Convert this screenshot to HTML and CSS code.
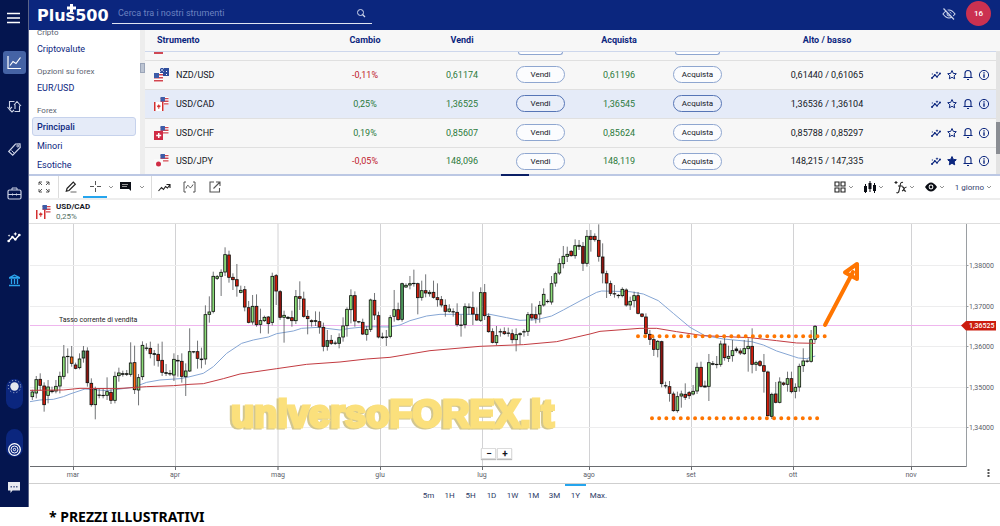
FILE: index.html
```html
<!DOCTYPE html>
<html lang="it">
<head>
<meta charset="utf-8">
<meta name="viewport" content="width=device-width, initial-scale=1">
<title>Plus500 - USD/CAD</title>
<link rel="stylesheet" href="styles.css">
</head>
<body>
<svg class="sprite" aria-hidden="true">
  <symbol id="us" viewBox="0 0 9 9"><path fill="#fff" d="M0 0h9v9H0z"/><path fill="#d2454f" d="M0 1h9v1.500H0zM0 4h9v1.500H0zM0 7h9v1.500H0z"/><path fill="#3d5ca8" d="M0 0h5v5H0z"/></symbol>
  <symbol id="f-nzd" viewBox="0 0 15 14"><rect x="6" y="0" width="9" height="8" fill="#2f4d9c"/><path d="M6 0l4 4M10 0L6 4" stroke="#c9d2ea" stroke-width=".7"/><path d="M12 3h1v1h-1zM12 6h1v1h-1z" fill="#fff"/><use href="#us" x="0" y="5" width="9" height="9"/></symbol>
  <symbol id="f-cad" viewBox="0 0 15 14"><use href="#us" x="6" y="0" width="9" height="8"/><path d="M0 5h10v9H0z" fill="#fff"/><path d="M0 5h1.500v9H0zM8 5h1.500v9H8zM4.800 7l.8 1.500 1.200.3-.8 1.500h-.8V12h-.8v-1.700h-.9l-.8-1.500 1.300-.3z" fill="#d32f2f"/></symbol>
  <symbol id="f-chf" viewBox="0 0 15 14"><use href="#us" x="6" y="0" width="9" height="8"/><rect x="0" y="5" width="9" height="9" fill="#d02c45"/><path d="M4 7h1.500v1.800h1.700v1.400H5.500V12H4v-1.800H2.200V8.800H4z" fill="#fff"/></symbol>
  <symbol id="f-jpy" viewBox="0 0 15 14"><use href="#us" x="6" y="0" width="9" height="8"/><rect x="0" y="5" width="9" height="9" fill="#fafafa"/><circle cx="4.500" cy="10" r="2.500" fill="#d02c45"/></symbol>
  <symbol id="spark" viewBox="0 0 12 12"><path d="M2 9l2.800-3 2.200 1.800L10 4.500" fill="none" stroke="currentColor" stroke-width="1.100"/><circle cx="2" cy="9" r="1"/><circle cx="4.800" cy="6" r=".9"/><circle cx="7" cy="7.800" r=".9"/><circle cx="10" cy="4.500" r="1"/><path d="M7 2.200l.5 1 1 .5-1 .5-.5 1-.5-1-1-.5 1-.5zM2.300 4l.3.700.7.300-.7.300-.3.700-.3-.7-.7-.3.700-.3z"/></symbol>
  <symbol id="star" viewBox="0 0 12 12"><path d="M6 1.500l1.300 2.900 3 .3-2.200 2.100.6 3L6 8.300 3.300 9.800l.6-3-2.200-2.100 3-.3z" stroke="currentColor" stroke-linejoin="round"/></symbol>
  <symbol id="bell" viewBox="0 0 12 12"><path d="M3 8V4.500a3 3 0 0 1 6 0V8M1.500 8.500h9M5 10.500h2" fill="none" stroke="currentColor" stroke-width="1.100"/></symbol>
  <symbol id="info" viewBox="0 0 12 12"><circle cx="6" cy="6" r="4.600" fill="none" stroke="currentColor"/><path d="M5.300 3.200h1.400v1.200H5.300zM5.300 5.300h1.400v3.500H5.300z"/></symbol>
  <symbol id="chev" viewBox="0 0 6 6"><path d="M1 2l2 2 2-2" fill="none" stroke="currentColor" stroke-width=".8"/></symbol>
</svg>

<div class="app">
  <aside class="rail">
    <button class="rail-menu" aria-label="Menu"><svg width="14" height="12" viewBox="0 0 14 12"><path d="M0 1.500h13M0 6h13M0 10.500h13" stroke="#fff" stroke-width="1.500"/></svg></button>
    <nav class="rail-nav" aria-label="Sezioni">
      <a class="rail-item active" href="#grafici" aria-label="Grafici"><svg width="15" height="15" viewBox="0 0 15 15"><path d="M1 1v12.500h13M3 10.500l3-4 3 2 4.500-6" fill="none" stroke="#fff" stroke-width="1.200"/></svg></a>
      <a class="rail-item" href="#ordini" aria-label="Ordini"><svg width="15" height="15" viewBox="0 0 15 15"><path d="M7.500 2.500h-5V9M.5 8l2 2.500L5 8M2.500 10.500L5 13l2-2M7.500 12.500h5V6.500M7 6l3-3.500 4 4.500M8 5.500V10" fill="none" stroke="#cdd3e6" stroke-width="1.100"/></svg></a>
      <a class="rail-item" href="#offerte" aria-label="Offerte"><svg width="15" height="15" viewBox="0 0 15 15"><path d="M8.500 2L13 1.800l.2 3.700-7.500 7.700-4-3.700z" fill="none" stroke="#cdd3e6" stroke-width="1.200"/><circle cx="10.800" cy="4" r="1" fill="none" stroke="#cdd3e6"/><path d="M4.500 8.500l2.500 2.400" stroke="#cdd3e6"/></svg></a>
      <a class="rail-item" href="#posizioni" aria-label="Posizioni"><svg width="15" height="15" viewBox="0 0 15 15"><rect x="1" y="4" width="13" height="9" rx="1.500" fill="none" stroke="#cdd3e6" stroke-width="1.200"/><path d="M5 4V2h5v2M1 8.500h4.500M9.500 8.500H14M5.500 7.500v2M9.500 7.500v2M5.500 8.500h4" fill="none" stroke="#cdd3e6"/></svg></a>
      <a class="rail-item white" href="#insights" aria-label="Insights"><svg width="16" height="16"><use href="#spark"/></svg></a>
      <a class="rail-item" href="#deposito" aria-label="Deposito"><svg width="13" height="13" viewBox="0 0 13 13"><path d="M6.500 1l5 2.500H1.500z M1 4h11M3.500 5v5M6.500 5v5M9.500 5v5M1 11.500h11" fill="none" stroke="#2ba4ee" stroke-width="1.300"/></svg></a>
    </nav>
    <div class="rail-foot">
      <button class="pill tall" aria-label="Tema chiaro"><svg width="15" height="15" viewBox="0 0 15 15"><circle cx="7.500" cy="7.500" r="4.200" fill="#e4e7ee"/><circle cx="7.500" cy="7.500" r="6.200" fill="none" stroke="#c4cce0" stroke-width="1" stroke-dasharray="1 2.250"/></svg></button>
      <button class="pill low" aria-label="Modalità reale"><svg width="15" height="15" viewBox="0 0 15 15" fill="none" stroke="#fff"><circle cx="7.500" cy="7.500" r="5.800" stroke-width="1.300"/><circle cx="7.500" cy="7.500" r="3.500"/><circle cx="7.500" cy="7.500" r="1.200"/></svg></button>
      <button class="chat" aria-label="Chat"><svg width="12" height="11" viewBox="0 0 12 11"><path d="M0 0h12v8.500H4.500L2.500 11V8.500H0z" fill="#e8eaf0"/><path d="M2.500 4h1.500v1.500H2.500zM5.300 4h1.500v1.500H5.300zM8 4h1.500v1.500H8z" fill="#53608c"/></svg></button>
    </div>
  </aside>

  <main class="main">
    <header class="topbar">
      <div class="logo">Plus500<svg class="plus" width="9" height="8" viewBox="0 0 9 8"><path d="M3 0h3v2.500h3v3H6V8H3V5.500H0v-3h3z" fill="#fff"/></svg></div>
      <div class="search">
        <input type="search" aria-label="Cerca" placeholder="Cerca tra i nostri strumenti">
        <svg width="10" height="10" viewBox="0 0 10 10"><circle cx="4.500" cy="4.500" r="3" fill="none" stroke="#d4dbef"/><path d="M6.500 6.500L9 9" stroke="#d4dbef" stroke-width="1.200"/></svg>
      </div>
      <div class="top-right">
        <button aria-label="Nascondi saldo"><svg width="14" height="12" viewBox="0 0 14 12"><path d="M1 6q6-8 12 0-6 8-12 0z" fill="none" stroke="#cbd3ea" stroke-width="1.200"/><circle cx="7" cy="6" r="2" fill="none" stroke="#cbd3ea"/><path d="M2.500 0l10.500 11" stroke="#0b267e" stroke-width="1.500"/><path d="M1.500.5l10.500 11" stroke="#cbd3ea" stroke-width="1.200"/></svg></button>
        <button class="badge" aria-label="Notifiche">16</button>
      </div>
    </header>

    <section class="market">
      <nav class="cats" aria-label="Categorie">
        <h2>Cripto</h2>
        <a href="#cripto">Criptovalute</a>
        <h2>Opzioni su forex</h2>
        <a href="#eurusd">EUR/USD</a>
        <h2>Forex</h2>
        <a class="selected" href="#principali">Principali</a>
        <a href="#minori">Minori</a>
        <a href="#esotiche">Esotiche</a>
      </nav>
      <div class="cats-scroll"><div class="thumb"></div></div>
      <div class="quotes">
        <table>
          <colgroup><col><col class="c-chg"><col class="c-num"><col class="c-btn"><col class="c-num"><col class="c-btn"><col class="c-range"><col class="c-act"></colgroup>
          <thead><tr><th class="name" scope="col">Strumento</th><th scope="col">Cambio</th><th scope="col">Vendi</th><td></td><th scope="col">Acquista</th><td></td><th scope="col">Alto / basso</th><td></td></tr></thead>
          <tbody>
            <tr class="cut"><td class="name"><i class="red-edge"></i></td><td></td><td></td><td><i class="pill-edge"></i></td><td></td><td><i class="pill-edge"></i></td><td></td><td></td></tr>
            <tr><td class="name"><svg class="flag"><use href="#f-nzd"/></svg>NZD/USD</td><td class="down">-0,11%</td><td class="up">0,61174</td><td><button class="trade">Vendi</button></td><td class="up">0,61196</td><td><button class="trade">Acquista</button></td><td>0,61440 / 0,61065</td><td><div class="acts"><button aria-label="Insights"><svg><use href="#spark"/></svg></button><button aria-label="Preferito"><svg class="hollow"><use href="#star"/></svg></button><button aria-label="Avviso"><svg><use href="#bell"/></svg></button><button aria-label="Dettagli"><svg><use href="#info"/></svg></button></div></td></tr>
            <tr class="current"><td class="name"><svg class="flag"><use href="#f-cad"/></svg>USD/CAD</td><td class="up">0,25%</td><td class="up">1,36525</td><td><button class="trade">Vendi</button></td><td class="up">1,36545</td><td><button class="trade">Acquista</button></td><td>1,36536 / 1,36104</td><td><div class="acts"><button aria-label="Insights"><svg><use href="#spark"/></svg></button><button aria-label="Preferito"><svg class="hollow"><use href="#star"/></svg></button><button aria-label="Avviso"><svg><use href="#bell"/></svg></button><button aria-label="Dettagli"><svg><use href="#info"/></svg></button></div></td></tr>
            <tr><td class="name"><svg class="flag"><use href="#f-chf"/></svg>USD/CHF</td><td class="up">0,19%</td><td class="up">0,85607</td><td><button class="trade">Vendi</button></td><td class="up">0,85624</td><td><button class="trade">Acquista</button></td><td>0,85788 / 0,85297</td><td><div class="acts"><button aria-label="Insights"><svg><use href="#spark"/></svg></button><button aria-label="Preferito"><svg class="hollow"><use href="#star"/></svg></button><button aria-label="Avviso"><svg><use href="#bell"/></svg></button><button aria-label="Dettagli"><svg><use href="#info"/></svg></button></div></td></tr>
            <tr><td class="name"><svg class="flag"><use href="#f-jpy"/></svg>USD/JPY</td><td class="down">-0,05%</td><td class="up">148,096</td><td><button class="trade">Vendi</button></td><td class="up">148,119</td><td><button class="trade">Acquista</button></td><td>148,215 / 147,335</td><td><div class="acts"><button aria-label="Insights"><svg><use href="#spark"/></svg></button><button aria-label="Preferito"><svg><use href="#star"/></svg></button><button aria-label="Avviso"><svg><use href="#bell"/></svg></button><button aria-label="Dettagli"><svg><use href="#info"/></svg></button></div></td></tr>
          </tbody>
        </table>
        <div class="quotes-scroll"><div class="thumb"></div></div>
      </div>
      <div class="splitter"></div>
    </section>

    <div class="tools">
      <button class="tool full" aria-label="Schermo intero"><svg width="12" height="12" viewBox="0 0 12 12"><path d="M1 4V1h3M8 1h3v3M11 8v3H8M4 11H1V8M1 1l3 3M11 1L8 4M11 11L8 8M1 11l3-3" fill="none" stroke="#444" stroke-width=".9"/></svg></button>
      <button class="tool" aria-label="Disegna"><svg width="12" height="12" viewBox="0 0 12 12"><path d="M2 7.500L8.300 1.200l2 2L4 9.500l-2.700.7z" fill="none" stroke="#222" stroke-width="1.200"/><path d="M5.500 11h6" stroke="#666"/></svg></button>
      <button class="tool on" aria-label="Mirino"><svg width="11" height="11" viewBox="0 0 11 11"><path d="M5.500 0v4M5.500 7v4M0 5.500h4M7 5.500h4" stroke="#555"/></svg></button>
      <button class="drop" aria-label="Opzioni mirino"><svg><use href="#chev"/></svg></button>
      <button class="tool" aria-label="Etichette"><svg width="12" height="10" viewBox="0 0 12 10"><path d="M0 0h11v9L9 7H0z" fill="#0c0f16"/><path d="M2 2.500h6M2 4.500h5" stroke="#999"/></svg></button>
      <button class="drop last" aria-label="Opzioni etichette"><svg><use href="#chev"/></svg></button>
      <button class="tool wide" aria-label="Tendenza"><svg width="13" height="11" viewBox="0 0 13 11"><path d="M.5 9l3-3.500 2 2 2-3 2 1.500L12 2.500M8.500 2.500H12V6" fill="none" stroke="#222" stroke-width="1.100"/></svg></button>
      <button class="tool wide" aria-label="Intervallo"><svg width="13" height="12" viewBox="0 0 13 12"><path d="M3 1H1v10h2M10 1h2v10h-2M3 7.500q1.500-5 3-2t4-2" fill="none" stroke="#555"/></svg></button>
      <button class="tool wide" aria-label="Apri in nuova finestra"><svg width="12" height="12" viewBox="0 0 12 12"><path d="M5 1H1v10h9.500V7M7 1h4v4M11 1L4.500 7.500" fill="none" stroke="#555" stroke-width="1.100"/></svg></button>
      <div class="tools-right">
        <button class="menu" aria-label="Layout"><svg width="12" height="12" viewBox="0 0 12 12"><path d="M1 1h4v4H1zM7 1h4v4H7zM1 7h4v4H1zM7 7h4v4H7z" fill="none" stroke="#222" stroke-width="1.100"/></svg><svg class="ch"><use href="#chev"/></svg></button>
        <button class="menu" aria-label="Tipo di grafico"><svg width="12" height="12" viewBox="0 0 12 12"><path d="M0 5h3v6H0zM4.500 2h3v6h-3zM9 4h3v6H9z" fill="#0a0d14"/><path d="M1.500 3v9M6 0v11M10.500 2v10" stroke="#0a0d14"/></svg><svg class="ch"><use href="#chev"/></svg></button>
        <button class="menu" aria-label="Indicatori"><svg width="13" height="13" viewBox="0 0 13 13"><path d="M9 1.500q-2.200-.8-2.700 2L5 10q-.6 2.500-2.600 1.600M4 5h4.500M8 6q1.500-.5 2 2t2 2M12.500 6q-2 .5-2.500 2t-2 2M.5 1.500h3M2 0v3" fill="none" stroke="#222" stroke-width="1.100"/></svg><svg class="ch"><use href="#chev"/></svg></button>
        <button class="menu" aria-label="Visualizzazione"><svg width="12" height="10" viewBox="0 0 12 10"><path d="M0 5q6-9 12 0-6 9-12 0z" fill="#0a0d14"/><circle cx="6" cy="5" r="2.400" fill="#fff"/><circle cx="6" cy="5" r="1.400" fill="#0a0d14"/></svg><svg class="ch"><use href="#chev"/></svg></button>
        <button class="menu period">1 giorno<svg class="ch"><use href="#chev"/></svg></button>
      </div>
    </div>

    <div class="chart-head">
      <svg class="flag"><use href="#f-cad"/></svg>
      <div><h1>USD/CAD</h1><p>0,25%</p></div>
    </div>

    <div class="chart">
      <svg class="plot" viewBox="30 224 970 259" role="img" aria-label="Grafico giornaliero USD/CAD">
        <path class="grid-v" d="M73.500 224v246M175.500 224v246M278 224v246M380.500 224v246M482.500 224v246M589.500 224v246M691.500 224v246M793.500 224v246M911.500 224v246"/>
        <path class="grid-h" d="M30 265.500h936M30 306.500h936M30 346.500h936M30 387.500h936M30 427.500h936"/>
        <path class="rate" d="M30 325.500h936"/>
        <g id="series" transform="translate(0 220) scale(.33333)"></g>
        <path class="axis" d="M30 466.500h936.500M73.500 467v3M175.500 467v3M278 467v3M380.500 467v3M482.500 467v3M589.500 467v3M691.500 467v3M793.500 467v3M911.500 467v3"/>
        <path class="axis-v" d="M966.500 224v243M966.500 265.500h2M966.500 306.500h2M966.500 346.500h2M966.500 387.500h2M966.500 427.500h2"/>
        <text class="rate-label" x="59" y="322">Tasso corrente di vendita</text>
        <text class="brand-mark" x="231" y="427">universoFOREX.it</text>
        <path class="level" d="M638 336.200h190M652 418.200h169"/>
        <path class="arrow-line" d="M825 325L853 272"/>
        <path class="arrow-head" d="M845 272.500l12-8.500v15z"/>
        <g class="months"><text x="73" y="477">mar</text><text x="175" y="477">apr</text><text x="278" y="477">mag</text><text x="380" y="477">giu</text><text x="482" y="477">lug</text><text x="589" y="477">ago</text><text x="691" y="477">set</text><text x="793" y="477">ott</text><text x="911" y="477">nov</text></g>
        <g class="prices"><text x="969" y="268">1,38000</text><text x="969" y="309">1,37000</text><text x="969" y="349">1,36000</text><text x="969" y="390">1,35000</text><text x="969" y="430">1,34000</text></g>
        <path d="M961 325.500l5-4.500h30v9.500h-30z" fill="#cb1c0e"/>
        <text class="price-tag" x="969" y="328">1,36525</text>
        <path class="more" d="M988.500 469v2M988.500 472v2M988.500 475v2"/>
      </svg>
      <div class="zoom"><button aria-label="Riduci">−</button><button aria-label="Ingrandisci">+</button></div>
    </div>

    <div class="ranges">
      <button>5m</button><button>1H</button><button>5H</button><button>1D</button><button>1W</button><button>1M</button><button>3M</button><button class="on">1Y</button><button class="max">Max.</button>
    </div>
  </main>
</div>
<footer class="note">* PREZZI ILLUSTRATIVI</footer>
<script src="chart.js"></script>
</body>
</html>
```
FILE: styles.css
```css
* { box-sizing: border-box; }
body { margin: 0; background: #fff; font-family: Roboto, "Liberation Sans", sans-serif; font-size: 9px; color: #14171f; }
button { margin: 0; padding: 0; border: 0; background: none; font: inherit; color: inherit; display: inline-flex; align-items: center; justify-content: center; }
a { color: inherit; text-decoration: none; }
h1, h2, p { margin: 0; font-size: inherit; }
svg { display: block; flex: none; }
.sprite { position: absolute; width: 0; height: 0; }

.app { display: flex; }
.main { flex: 1; min-width: 0; }

/* left rail */
.rail { width: 29px; background: #04154f; border-right: 1px solid #5a6488; display: flex; flex-direction: column; align-items: center; }
.rail-menu { height: 36px; }
.rail-nav { height: 241px; margin-top: 15px; display: flex; flex-direction: column; justify-content: space-between; }
.rail-item { width: 23px; height: 23px; display: flex; align-items: center; justify-content: center; border-radius: 3px; }
.rail-item.active { background: #4563a5; }
.rail-item.white { color: #fff; fill: #fff; }
.rail-foot { margin-top: auto; display: flex; flex-direction: column; align-items: center; padding-top: 24px; }
.pill { width: 17px; border-radius: 9px; background: #0b267e; }
.pill.tall { height: 30px; align-items: flex-start; margin-bottom: 20px; }
.pill.low { height: 28px; align-items: flex-end; }
.chat { height: 20px; margin: 20px 0 10px; }

/* top bar */
.topbar { height: 30px; background: #0b267e; display: flex; align-items: center; padding: 0 9px 3px 8px; }
.logo { position: relative; width: 70px; margin-right: 5px; padding-top: 5px; color: #fff; font: bold 16px/20px "DejaVu Sans", sans-serif; }
.plus { position: absolute; left: 30px; top: 3px; }
.search { flex: 0 1 260px; height: 18px; margin-top: 2px; border-bottom: 1px solid #dfe4f2; display: flex; align-items: center; padding: 0 6px 2px; }
.search input { flex: 1; min-width: 0; border: 0; padding: 0; background: none; outline: none; color: #fff; font: 9px Roboto, sans-serif; }
.search input::placeholder { color: #6c82c0; }
.top-right { margin-left: auto; display: flex; align-items: center; gap: 10px; }
.badge { width: 25px; height: 25px; border-radius: 50%; background: #cb3150; color: #fff; font-size: 8px; font-weight: 500; }

/* market list */
.market { position: relative; display: flex; height: 146px; border-bottom: 2px solid #bcc8e4; }
.cats { flex: 0 0 111px; overflow: hidden; display: flex; flex-direction: column; justify-content: flex-end; padding: 0 4px 0 3px; color: #0b267e; }
.cats h2 { flex: none; height: 20px; padding: 7px 5px 0; font-size: 8px; line-height: 14px; font-weight: 400; color: #5b6270; }
.cats a { flex: none; height: 19px; padding: 0 4px; border: 1px solid transparent; border-radius: 3px; line-height: 18px; }
.cats .selected { background: #e5ebf8; border-color: #c6d2ec; font-weight: 500; }
.cats-scroll { flex: 0 0 5px; background: #ededed; padding-top: 33px; }
.cats-scroll .thumb { height: 10px; background: #bcc4d2; border: 1px solid #9ba5b8; }
.quotes { flex: 1; min-width: 0; display: flex; align-items: flex-start; background: #f7f7f7; }
table { flex: 1; min-width: 0; table-layout: fixed; border-collapse: collapse; }
.c-chg { width: 94px; }
.c-num { width: 100px; }
.c-btn { width: 57px; }
.c-range { width: 202px; }
.c-act { width: 68px; }
th, td { padding: 0; text-align: center; white-space: nowrap; }
thead th, thead td { height: 21px; color: #0b267e; font-weight: 700; border-bottom: 1px solid #cdd7ec; }
tbody tr { height: 29px; border-bottom: 1px solid #e0e0e0; }
tbody tr:last-child { height: 28px; border-bottom: 0; }
tbody .cut { height: 9px; }
.current { background: #e5ebf8; }
th.name { text-align: left; padding-left: 12px; }
td.name { text-align: left; padding-left: 9px; }
.flag { display: inline-block; vertical-align: -4px; width: 15px; height: 14px; margin-right: 7px; }
.red-edge { display: block; width: 9px; height: 2px; margin-bottom: 6px; background: #cf4854; }
.pill-edge { display: block; width: 45px; height: 3px; margin: 0 auto 5px; border: 1px solid #8ea6d0; border-top: 0; border-radius: 0 0 10px 10px; background: #fff; }
.up { color: #2c7a3c; }
.down { color: #c0202c; }
.trade { width: 49px; height: 17px; border: 1px solid #8ea6d0; border-radius: 9px; background: #fbfcfe; font-size: 8px; vertical-align: middle; }
.current .trade { border-color: #5675b6; background: #e9eef9; }
.acts { display: flex; gap: 4px; padding-left: 2px; color: #0b267e; fill: #0b267e; }
.acts svg { width: 12px; height: 12px; }
.acts .hollow { fill: none; }
.quotes-scroll { width: 4px; height: 123px; margin-top: 21px; background: #e3e3e3; padding-top: 71px; }
.quotes-scroll .thumb { height: 32px; background: #8a8d93; }
.splitter { position: absolute; left: 472px; bottom: -2px; width: 28px; height: 2px; background: #0a1f66; }

/* chart tools */
.tools { display: flex; align-items: stretch; height: 24px; border-bottom: 2px solid #ededed; padding-left: 1px; }
.tool { width: 24px; }
.tool.wide { width: 25px; }
.tool.full { width: 29px; border-right: 1px solid #dcdcdc; }
.tool.on { border-bottom: 2px solid #25a5ee; }
.drop { width: 7px; }
.drop svg, .ch { width: 6px; height: 6px; color: #777; }
.drop.last { width: 14px; padding-right: 6px; border-right: 1px solid #dcdcdc; }
.tools-right { margin-left: auto; display: flex; gap: 10px; padding-right: 8px; }
.menu { gap: 2px; }
.period { font-size: 8px; color: #33406c; }
.chart-head { display: flex; align-items: center; height: 24px; padding-left: 7px; border-bottom: 1px solid #dedede; }
.chart-head .flag { margin-right: 5px; }
.chart-head h1 { font-size: 8px; line-height: 10px; font-weight: 700; }
.chart-head p { font-size: 8px; line-height: 10px; color: #527064; }

/* chart */
.chart { position: relative; padding-left: 1px; border-bottom: 1px solid #cfcfcf; }
.plot { width: 100%; height: auto; font-family: Roboto, "Liberation Sans", sans-serif; }
.plot path { fill: none; }
.plot path[fill] { fill: #cb1c0e; }
.grid-v { stroke: #d2d2d4; }
.grid-h { stroke: #ededee; }
.rate { stroke: #efb6ee; }
.axis { stroke: #6a6c70; }
.axis-v { stroke: #9a9ea2; }
.more { stroke: #555; stroke-width: 2; }
.rate-label { font-size: 7px; fill: #222; }
.months { font-size: 7px; fill: #5b6068; text-anchor: middle; }
.prices { font-size: 7px; fill: #5b6068; }
.price-tag { font-size: 7px; font-weight: 500; fill: #fff; }
.plot .level { stroke: #ff7500; stroke-width: 4; stroke-linecap: round; stroke-dasharray: 0 7.180; }
.arrow-line { stroke: #ff7500; stroke-width: 4; stroke-linecap: round; }
.plot .arrow-head { stroke: #ff7500; stroke-width: 4; stroke-linejoin: round; }
.brand-mark { font: bold 38px "Liberation Sans", sans-serif; fill: #fbe07c; stroke: #fbe07c; stroke-width: 3; filter: drop-shadow(-2px 1px 0 #d2c68f); }
.wick { stroke: #55585c; stroke-width: 2.500; }
.body { stroke: #10130f; stroke-width: 2.500; }
.g { fill: #8bdc78; }
.d { fill: #4c9a5c; }
.r { fill: #d01c0c; }
.m { fill: #8c1410; }
.o { fill: #ff6a10; }
.k { fill: #10130f; }
.ma-fast { stroke: #86a6d4; stroke-width: 3; }
.ma-slow { stroke: #c23a40; stroke-width: 3; }
.zoom { position: absolute; left: 46.600%; bottom: 24px; display: flex; gap: 1px; }
.zoom button { width: 15px; height: 11px; background: #fff; border: 1px solid #dcdcdc; box-shadow: 0 1px 1px #bbb; font-size: 10px; font-weight: 700; line-height: 9px; }

.ranges { display: flex; justify-content: center; height: 23px; font-size: 8px; color: #2c3a66; }
.ranges button { width: 21px; border-top: 2px solid transparent; padding-bottom: 3px; }
.ranges .on { border-color: #25a5ee; }
.ranges .max { width: 25px; }
.note { padding-left: 49px; font: bold 14px/20px "Noto Sans", sans-serif; color: #000; }
```
FILE: chart.js
```js
// One candle per entry: high, body top, body bottom, low, colour class.
const candles = `509,515,531,540,g 468,478,520,535,g 460,477,497,512,r 487,497,555,575,r 480,500,527,550,g 500,511,516,520,k 480,498,514,520,g 455,468,499,520,g
375,410,470,478,g 385,408,411,460,k 378,410,431,440,o 428,434,446,448,r 400,416,444,448,g 378,392,415,428,d 382,392,489,500,m 475,489,555,560,r
500,508,555,598,g 505,524,527,535,k 505,525,528,535,k 472,514,527,540,g 508,516,542,552,r 455,468,542,550,g 443,458,468,485,g 452,460,464,470,k
450,460,464,468,k 367,428,464,470,g 377,427,510,522,o 462,472,511,556,g 364,375,471,480,g 370,383,386,392,k 365,384,402,415,r 390,400,404,437,k
371,402,423,440,r 365,420,458,468,r 432,457,461,468,k 450,459,463,468,k 400,417,466,483,g 405,420,424,470,k 400,423,470,488,r 430,452,471,528,g
325,394,454,456,g 394,394,397,400,k 362,394,416,446,r 383,416,420,445,k 256,283,418,434,g 229,275,284,308,g 155,168,275,280,g 165,169,176,180,g
148,156,170,228,g 82,103,157,168,g 92,104,173,188,r 160,171,180,210,r 132,178,199,230,r 197,210,218,220,g 198,208,262,274,r 243,262,308,310,r
225,258,307,314,g 223,258,315,320,r 266,301,314,340,g 287,291,303,306,g 288,290,312,341,r 158,168,308,316,g 162,166,214,255,r 210,214,293,300,m
272,285,293,368,g 288,291,296,298,k 272,292,303,320,r 210,229,303,312,g 184,229,236,270,r 215,236,290,293,r 270,288,297,343,r 298,301,306,320,r
274,301,305,318,k 275,304,322,341,r 308,321,380,394,r 330,361,380,392,d 345,360,371,375,r 362,368,371,375,k 340,352,371,385,d 292,317,352,365,g
262,267,318,350,g 208,226,270,310,g 214,226,304,320,r 303,304,307,310,k 296,306,343,345,r 318,328,344,362,g 236,239,329,336,g 219,240,286,300,r
275,286,352,355,r 338,350,354,357,k 330,350,353,378,k 285,292,350,355,g 210,268,290,305,g 248,268,300,302,r 188,190,299,305,d 190,195,202,204,g
168,190,196,208,g 149,189,192,200,k 188,190,234,283,r 182,211,233,242,g 163,211,220,232,r 210,216,222,230,g 182,216,233,236,r 190,232,240,260,r
228,238,256,262,r 238,255,275,290,r 253,266,275,278,g 265,274,277,290,k 250,276,315,320,r 284,314,317,350,k 250,259,315,325,d 250,260,264,285,k
215,262,283,315,r 262,283,301,303,r 202,217,302,306,g 192,217,288,300,r 280,288,336,338,r 325,334,368,370,r 318,346,369,376,g 326,334,337,350,k
322,334,342,345,r 323,338,341,350,k 328,340,360,370,r 325,343,360,394,g 337,340,345,374,g 328,334,337,350,k 276,283,335,348,g 250,282,295,302,r
260,283,296,310,r 243,255,283,308,g 205,222,256,260,g 238,243,246,250,k 168,190,247,254,g 155,160,190,200,g 115,130,160,165,g 78,108,132,145,g
80,102,110,126,g 90,93,108,110,r 58,76,108,116,g 60,75,80,90,g 66,78,131,153,m 30,48,131,140,g 30,48,59,95,r 40,48,60,65,r
13,60,110,125,r 70,110,160,190,m 152,160,190,234,r 182,190,221,228,r 195,220,223,233,r 222,225,228,235,k 202,207,228,232,g 205,209,256,260,r
230,243,256,270,g 215,226,243,262,g 216,226,281,283,r 280,281,290,292,r 280,290,342,350,r 330,342,359,375,r 350,358,389,408,r 360,363,389,412,g
362,364,492,502,m 485,496,499,505,k 483,499,521,545,r 515,521,573,575,r 515,529,573,578,g 512,521,529,563,g 490,522,533,540,r 513,517,528,537,r
495,513,523,526,g 428,441,514,522,g 425,441,500,502,r 482,497,502,503,k 402,427,500,543,g 423,430,434,436,k 408,432,435,445,k 362,371,434,440,g
352,371,414,422,r 377,408,416,426,g 360,391,408,425,g 380,386,393,398,k 385,392,400,405,r 360,385,402,405,g 355,378,387,455,g 325,378,434,460,r
422,427,434,453,g 420,424,437,440,r 402,436,455,518,r 452,455,588,590,r 518,522,590,597,d 486,521,548,550,r 472,485,548,550,g 485,488,494,498,r
455,475,494,515,g 455,475,516,520,r 490,501,515,535,g 431,438,502,515,g 385,422,438,456,g 418,422,425,428,k 330,358,425,428,g 315,318,359,368,g`;

const fast = "90,545 120,540 160,538 190,530 210,522 255,507 320,512 400,502 440,487 480,480 540,476 570,470 610,460 640,440 680,400 725,370 760,360 805,351 830,341 880,333 905,325 955,322 1020,330 1050,325 1100,320 1170,321 1200,315 1230,302 1280,288 1320,283 1470,283 1520,293 1560,301 1610,299 1655,288 1690,270 1740,243 1790,217 1805,213 1890,215 1930,222 1975,242 2020,280 2070,322 2115,347 2170,357 2255,365 2290,375 2330,393 2395,414 2420,416 2446,408";
const slow = "90,511 190,510 240,505 350,506 440,500 520,497 570,493 610,491 670,476 720,462 830,446 920,433 1020,426 1100,417 1170,412 1230,402 1290,392 1440,379 1570,374 1670,365 1770,342 1800,334 1920,325 1970,325 2030,335 2110,347 2250,353 2330,362 2390,369 2446,370";

const firstX = 97;
const step = 11.8;
let out = `<polyline class="ma-fast" fill="none" points="${fast}"/>`;
candles.split(/\s+/).forEach((entry, i) => {
  const [high, top, bottom, low, tone] = entry.split(",");
  const x = firstX + i * step;
  out += `<line class="wick" x1="${x}" x2="${x}" y1="${high}" y2="${low}"/>`;
  out += `<rect class="body ${tone}" x="${x - 4}" width="8" y="${+top + 1}" height="${Math.max(1, bottom - top - 2)}"/>`;
});
out += `<polyline class="ma-slow" fill="none" points="${slow}"/>`;
document.getElementById("series").innerHTML = out;
```
